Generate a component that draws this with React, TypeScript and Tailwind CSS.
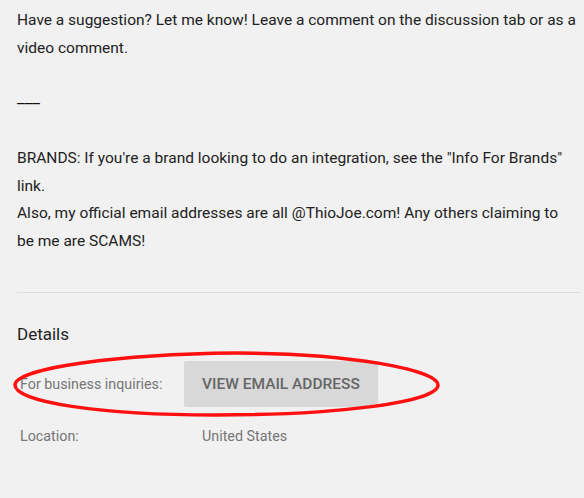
import React from "react";

const App: React.FC = () => {
  return (
    <div className="relative min-h-screen w-full bg-[#f1f1f1] font-['Roboto',sans-serif]">
      <div className="pl-[17px] pr-[4px] pt-[7px]">
        <div className="whitespace-nowrap text-[15.5px] leading-[27.6px] text-[#222]">
          <div>Have a suggestion? Let me know! Leave a comment on the discussion tab or as a</div>
          <div>video comment.</div>
          <div>&nbsp;</div>
          <div className="relative -top-[6px] text-[17px] text-[#111]">___</div>
          <div>&nbsp;</div>
          <div>BRANDS: If you're a brand looking to do an integration, see the "Info For Brands"</div>
          <div>link.</div>
          <div>Also, my official email addresses are all @ThioJoe.com! Any others claiming to</div>
          <div>be me are SCAMS!</div>
        </div>

        <div className="mt-[37px] border-t border-[#dcdcdc]" />

        <div className="pt-[31px] text-[17px] leading-[20px] text-[#222]">Details</div>

        <div className="mt-[17px] flex items-center text-[14.3px] text-[#767676]">
          <div className="w-[167px] pl-[3px]">For business inquiries:</div>
          <button className="flex h-[46px] w-[194px] items-center justify-center rounded-[2px] bg-[#d8d8d8] text-[15.5px] font-medium uppercase text-[#666]">
            View email address
          </button>
        </div>

        <div className="mt-[19px] flex items-center text-[14.3px] text-[#767676]">
          <div className="w-[185px] pl-[3px]">Location:</div>
          <div>United States</div>
        </div>
      </div>

      <svg
        className="pointer-events-none absolute left-0 top-0"
        width="584"
        height="498"
        viewBox="0 0 584 498"
      >
        <path
          d="M 15 385 C 15 368, 120 354, 235 353 C 350 353, 438 370, 438 385 C 438 402, 340 415, 215 415 C 100 415, 15 402, 15 385 Z"
          fill="none"
          stroke="#ff1010"
          strokeWidth="3.5"
        />
      </svg>
    </div>
  );
};

export default App;
